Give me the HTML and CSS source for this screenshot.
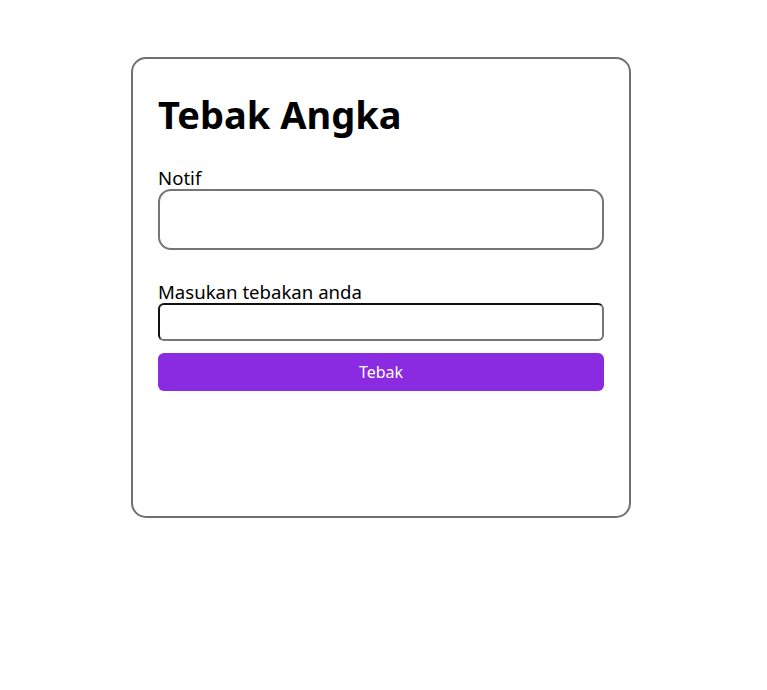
FILE: index.html
```html
<!DOCTYPE html>
<html>
<head>
<meta charset="utf-8">
<link rel="stylesheet" href="styles.css">
</head>
<body>
<div class="card">
  <h1 class="title">Tebak Angka</h1>
  <div class="field">
    <label class="label">Notif</label>
    <div class="notif"></div>
  </div>
  <div class="field field-guess">
    <label class="label" for="guess">Masukan tebakan anda</label>
    <input class="input" id="guess" type="text">
  </div>
  <button class="btn">Tebak</button>
</div>
</body>
</html>
```
FILE: styles.css
```css
html, body { margin: 0; padding: 0; background: #fff; }
body {
  font-family: "Noto Sans", "Open Sans", sans-serif;
  color: #000;
  padding: 57px 0 0 131px;
}
.card {
  box-sizing: border-box;
  width: 500px;
  height: 461px;
  border: 2px solid #707070;
  border-radius: 15px;
  padding: 27px 25px 25px 25px;
}
.title {
  margin: 0;
  font-size: 38px;
  font-weight: 700;
  line-height: 56px;
}
.field { display: flex; flex-direction: column; margin-top: 25px; }
.field-guess { margin-top: 31px; }
.label { font-size: 18.6px; line-height: 22px; }
.notif {
  box-sizing: border-box;
  height: 61px;
  border: 2px solid #767676;
  border-radius: 13px;
}
.input {
  box-sizing: border-box;
  height: 38px;
  margin: 0;
  border: 2px solid #767676;
  border-top-color: #111;
  border-left-color: #111;
  border-radius: 6px;
  font: inherit;
}
.btn {
  display: block;
  box-sizing: border-box;
  width: 100%;
  height: 38px;
  margin-top: 12px;
  border: none;
  border-radius: 6px;
  background: #8a2be2;
  color: #fff;
  font-family: inherit;
  font-size: 16px;
}
```
